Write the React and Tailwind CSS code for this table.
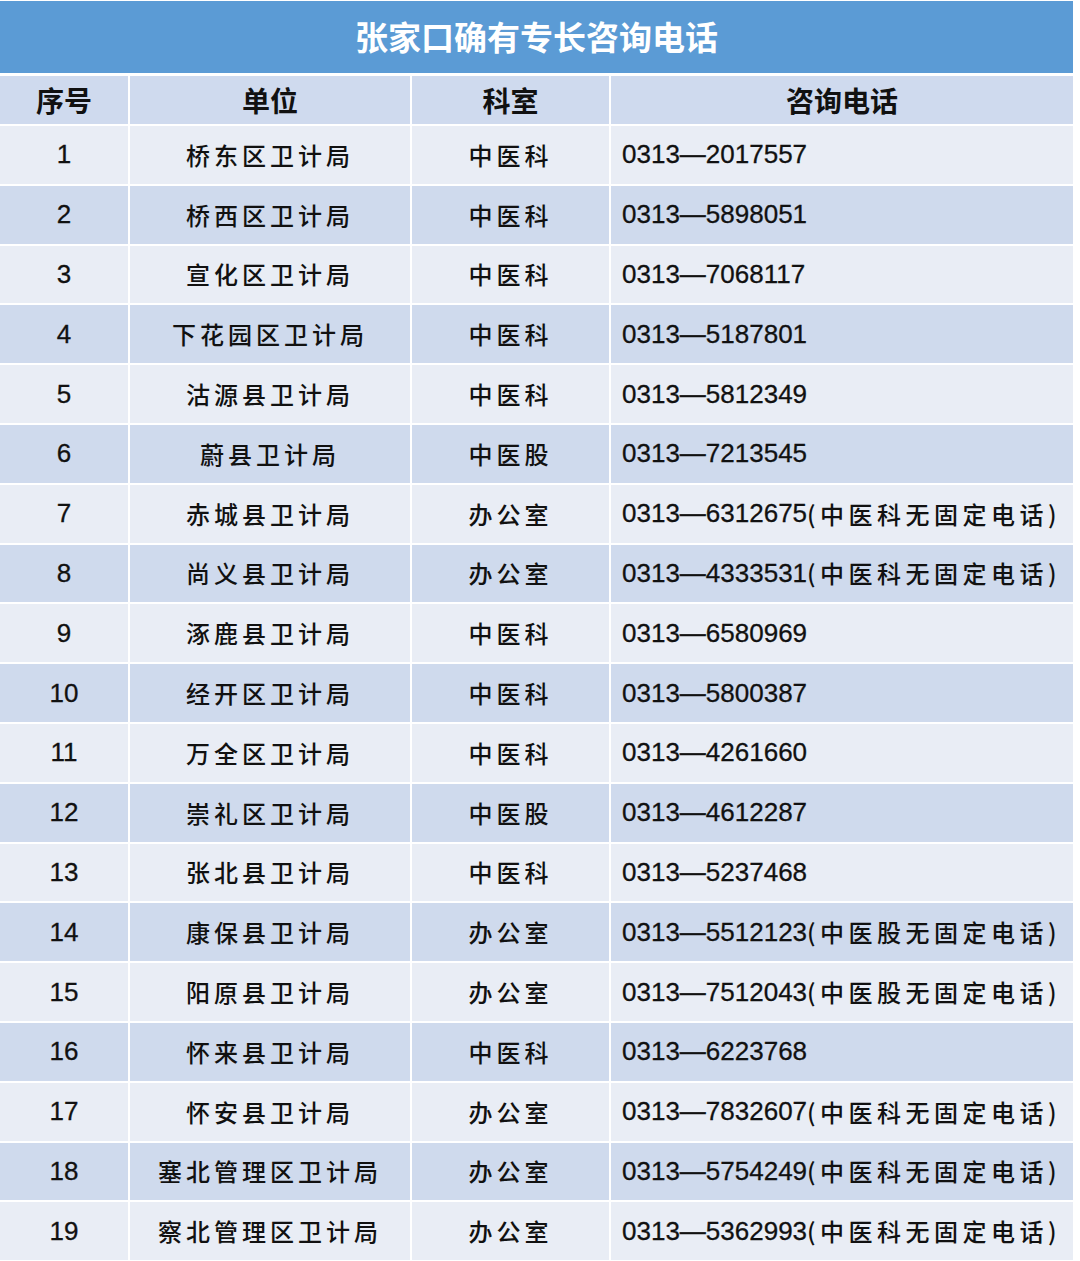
import React from 'react';

const rows = [
  ['1', '桥东区卫计局', '中医科', '0313—2017557', ''],
  ['2', '桥西区卫计局', '中医科', '0313—5898051', ''],
  ['3', '宣化区卫计局', '中医科', '0313—7068117', ''],
  ['4', '下花园区卫计局', '中医科', '0313—5187801', ''],
  ['5', '沽源县卫计局', '中医科', '0313—5812349', ''],
  ['6', '蔚县卫计局', '中医股', '0313—7213545', ''],
  ['7', '赤城县卫计局', '办公室', '0313—6312675', '中医科无固定电话'],
  ['8', '尚义县卫计局', '办公室', '0313—4333531', '中医科无固定电话'],
  ['9', '涿鹿县卫计局', '中医科', '0313—6580969', ''],
  ['10', '经开区卫计局', '中医科', '0313—5800387', ''],
  ['11', '万全区卫计局', '中医科', '0313—4261660', ''],
  ['12', '崇礼区卫计局', '中医股', '0313—4612287', ''],
  ['13', '张北县卫计局', '中医科', '0313—5237468', ''],
  ['14', '康保县卫计局', '办公室', '0313—5512123', '中医股无固定电话'],
  ['15', '阳原县卫计局', '办公室', '0313—7512043', '中医股无固定电话'],
  ['16', '怀来县卫计局', '中医科', '0313—6223768', ''],
  ['17', '怀安县卫计局', '办公室', '0313—7832607', '中医科无固定电话'],
  ['18', '塞北管理区卫计局', '办公室', '0313—5754249', '中医科无固定电话'],
  ['19', '察北管理区卫计局', '办公室', '0313—5362993', '中医科无固定电话'],
];

const cjk = "font-['Noto_Sans_CJK_SC',sans-serif]";
const num = "font-['Liberation_Sans','Noto_Sans_CJK_SC',sans-serif]";
const cols = 'grid grid-cols-[128px_280px_197px_462px] gap-x-[2px]';

export default function App() {
  return (
    <div className="w-[1080px] h-[1261px] bg-white pt-[1px]">
      <div className="w-[1073px] flex flex-col">
        <div className={`h-[72px] bg-[#5b9bd5] flex items-center justify-center text-white text-[33px] font-bold ${cjk}`}>
          张家口确有专长咨询电话
        </div>
        <div className={`${cols} mt-[3px] h-[48px] text-[#111] text-[28px] font-bold ${cjk}`}>
          {['序号', '单位', '科室', '咨询电话'].map((h) => (
            <div key={h} className="bg-[#cfdaee] flex items-center justify-center">{h}</div>
          ))}
        </div>
        {rows.map((r, i) => (
          <div key={r[0]} className={`${cols} mt-[2px] h-[57.8px] text-[#111]`}>
            {[0, 1, 2, 3].map((c) => (
              <div key={c} className={`${i % 2 === 0 ? 'bg-[#e9edf5]' : 'bg-[#cfdaed]'} flex items-center ${c === 3 ? 'justify-start pl-[11px]' : 'justify-center'}`}>
                {c === 0 && <span className={`${num} text-[26px] [-webkit-text-stroke:0.3px_#111]`}>{r[0]}</span>}
                {(c === 1 || c === 2) && <span className={`${cjk} text-[24px] font-medium tracking-[4px]`}>{r[c]}</span>}
                {c === 3 && (
                  <span className="flex items-center whitespace-nowrap">
                    <span className={`${num} text-[26px] [-webkit-text-stroke:0.3px_#111]`}>{r[3]}</span>
                    {r[4] && (
                      <span className={`${cjk} text-[24px] font-medium tracking-[4.5px]`}>({r[4]})</span>
                    )}
                  </span>
                )}
              </div>
            ))}
          </div>
        ))}
      </div>
    </div>
  );
}
